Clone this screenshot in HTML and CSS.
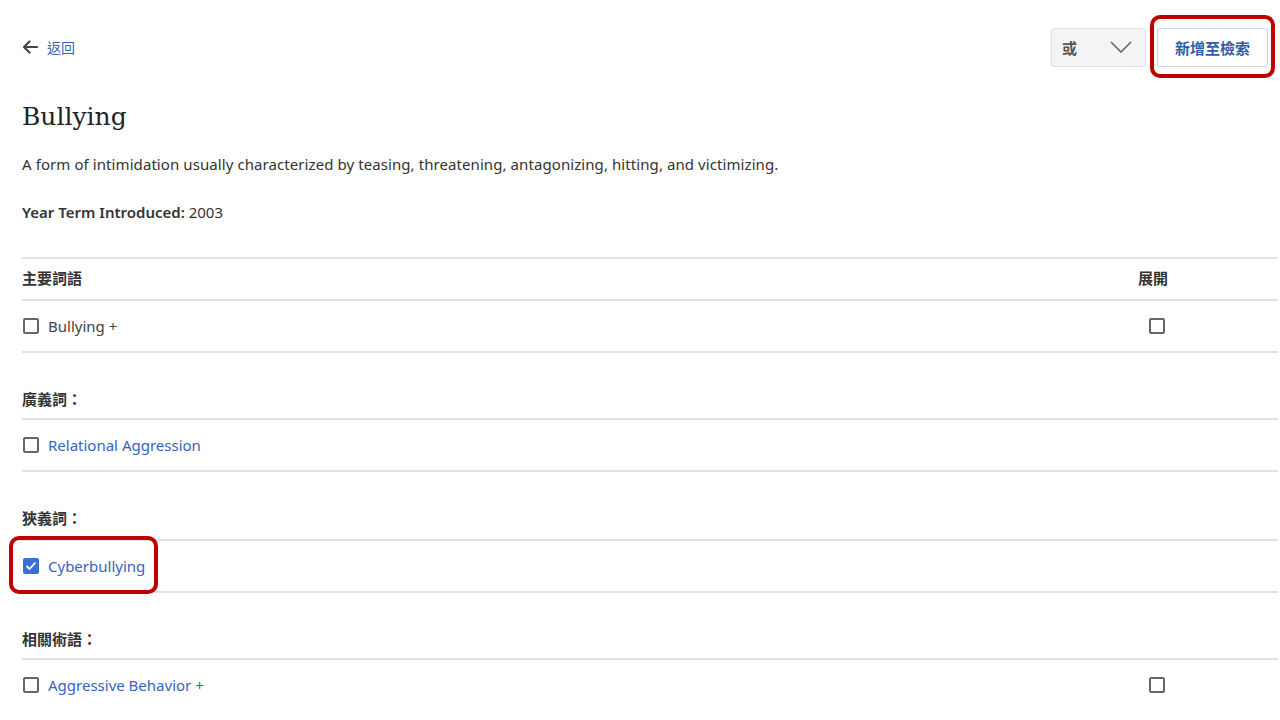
FILE: index.html
```html
<!DOCTYPE html>
<html lang="zh-Hant">
<head>
<meta charset="utf-8">
<title>Bullying</title>
<link rel="stylesheet" href="styles.css">
</head>
<body>
<div class="page">
  <div class="topbar">
    <a class="back" href="#">
      <svg width="16" height="14" viewBox="0 0 16 14"><path d="M15 7H2M7.5 1.5L2 7l5.5 5.5" fill="none" stroke="#444" stroke-width="2.2" stroke-linecap="round" stroke-linejoin="round"/></svg>
      <span>返回</span>
    </a>
    <div class="actions">
      <div class="select">
        <span>或</span>
        <svg width="22" height="12" viewBox="0 0 22 12"><path d="M1 1l10 10L21 1" fill="none" stroke="#666" stroke-width="1.6"/></svg>
      </div>
      <div class="btn-wrap">
        <button class="btn">新增至檢索</button>
        <span class="mark mark-btn"></span>
      </div>
    </div>
  </div>

  <h1 class="title">Bullying</h1>
  <p class="desc">A form of intimidation usually characterized by teasing, threatening, antagonizing, hitting, and victimizing.</p>
  <p class="year"><b>Year Term Introduced:</b> 2003</p>

  <div class="table">
    <div class="row head">
      <span class="label">主要詞語</span>
      <span class="exp exp-head">展開</span>
    </div>
    <div class="row item">
      <span class="cb"></span><span class="term">Bullying +</span>
      <span class="exp"><span class="cb"></span></span>
    </div>

    <div class="section">廣義詞：</div>
    <div class="row item">
      <span class="cb"></span><a class="link" href="#">Relational Aggression</a>
    </div>

    <div class="section tall">狹義詞：</div>
    <div class="row item">
      <span class="marked">
        <span class="cb checked"><svg width="12" height="10" viewBox="0 0 12 10"><path d="M1.5 5l3 3 6-6.5" fill="none" stroke="#fff" stroke-width="1.8"/></svg></span><a class="link" href="#">Cyberbullying</a>
        <span class="mark mark-item"></span>
      </span>
    </div>

    <div class="section">相關術語：</div>
    <div class="row item last">
      <span class="cb"></span><a class="link" href="#">Aggressive Behavior +</a>
      <span class="exp"><span class="cb"></span></span>
    </div>
  </div>
</div>
</body>
</html>
```
FILE: styles.css
```css
html, body {
  margin: 0;
  padding: 0;
  background: #fff;
}
body {
  font-family: "Noto Sans", "Noto Sans CJK TC", sans-serif;
  color: #333;
  font-size: 15px;
}
.page {
  padding: 0 2px 0 22px;
}
.topbar {
  display: flex;
  justify-content: space-between;
  align-items: center;
  height: 94px;
  padding-right: 10px;
}
.back {
  display: flex;
  align-items: center;
  gap: 9px;
  text-decoration: none;
  color: #3464be;
  font-size: 14px;
  font-family: "Noto Sans CJK TC", sans-serif;
}
.actions {
  display: flex;
  align-items: center;
  gap: 11px;
}
.select {
  box-sizing: border-box;
  width: 95px;
  height: 39px;
  display: flex;
  align-items: center;
  justify-content: space-between;
  padding: 0 13px 0 10px;
  background: #f4f4f4;
  border: 1px solid #e0e0e0;
  border-radius: 3px;
  font-family: "Noto Sans CJK TC", sans-serif;
  font-weight: 700;
  font-size: 15px;
  color: #555;
}
.btn-wrap { position: relative; }
.btn {
  box-sizing: border-box;
  width: 111px;
  height: 39px;
  background: #fff;
  border: 1px solid #c9d3e6;
  border-radius: 3px;
  font-family: "Noto Sans CJK TC", sans-serif;
  font-weight: 700;
  font-size: 15px;
  color: #2f5da8;
  padding: 0;
}
.mark {
  position: absolute;
  border: 4px solid #c00000;
  border-radius: 10px;
  pointer-events: none;
}
.mark-btn {
  left: -7px;
  top: -13px;
  width: 117px;
  height: 55px;
}
.title {
  margin: 0;
  font-family: "DejaVu Serif", "Liberation Serif", serif;
  font-weight: 400;
  font-size: 25px;
  color: #222;
  line-height: 46px;
}
.desc {
  margin: 14px 0 0;
  line-height: 20px;
  letter-spacing: 0.08px;
}
.year {
  margin: 28px 0 0;
  line-height: 20px;
}
.year b { font-weight: 600; }
.table {
  margin-top: 35px;
  border-top: 2px solid #e2e2e2;
}
.row {
  display: flex;
  align-items: center;
  border-bottom: 2px solid #e2e2e2;
}
.row.head {
  height: 37px;
  padding-bottom: 3px;
}
.row.item {
  height: 50px;
}
.row.last { border-bottom: none; }
.label, .section {
  font-family: "Noto Sans", "Noto Sans CJK TC", sans-serif;
  font-weight: 700;
  font-size: 15px;
  color: #333;
}
.section {
  box-sizing: border-box;
  height: 67px;
  padding-top: 36px;
  border-bottom: 2px solid #e2e2e2;
  line-height: 20px;
}
.section.tall { height: 69px; }
.exp {
  margin-left: auto;
  width: 40px;
  margin-right: 102px;
  display: flex;
  justify-content: center;
  font-weight: 700;
  font-size: 15px;
  color: #333;
}
.exp-head {
  width: 50px;
  margin-right: 100px;
}
.head .label { flex: 1; }
.cb {
  box-sizing: border-box;
  width: 16px;
  height: 16px;
  border: 2px solid #666;
  border-radius: 2px;
  display: inline-flex;
  align-items: center;
  justify-content: center;
  flex-shrink: 0;
  margin-left: 1px;
}
.cb.checked {
  background: #3a6fd6;
  border-color: #3a6fd6;
}
.term, .link {
  margin-left: 9px;
  font-size: 15px;
}
.term { color: #444; }
.link {
  color: #3464be;
  text-decoration: none;
}
.marked {
  position: relative;
  display: flex;
  align-items: center;
}
.mark-item {
  left: -13px;
  top: -20px;
  width: 141px;
  height: 50px;
}
```
